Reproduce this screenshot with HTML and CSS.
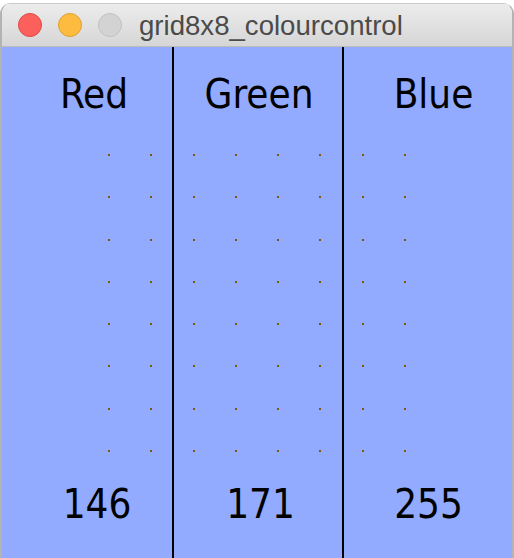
FILE: index.html
```html
<!DOCTYPE html>
<html>
<head>
<meta charset="utf-8">
<link rel="stylesheet" href="styles.css">
</head>
<body>
<div class="window">
  <div class="titlebar">
    <span class="light light-close"></span>
    <span class="light light-min"></span>
    <span class="light light-max"></span>
    <span class="title">grid8x8_colourcontrol</span>
  </div>
  <div class="content">
    <div class="col col-red">
      <div class="label">Red</div>
      <div class="value">146</div>
    </div>
    <div class="divider"></div>
    <div class="col col-green">
      <div class="label">Green</div>
      <div class="value">171</div>
    </div>
    <div class="divider"></div>
    <div class="col col-blue">
      <div class="label">Blue</div>
      <div class="value">255</div>
    </div>
    <div class="dots">
      <i></i><i></i><i></i><i></i><i></i><i></i><i></i><i></i>
      <i></i><i></i><i></i><i></i><i></i><i></i><i></i><i></i>
      <i></i><i></i><i></i><i></i><i></i><i></i><i></i><i></i>
      <i></i><i></i><i></i><i></i><i></i><i></i><i></i><i></i>
      <i></i><i></i><i></i><i></i><i></i><i></i><i></i><i></i>
      <i></i><i></i><i></i><i></i><i></i><i></i><i></i><i></i>
      <i></i><i></i><i></i><i></i><i></i><i></i><i></i><i></i>
      <i></i><i></i><i></i><i></i><i></i><i></i><i></i><i></i>
    </div>
  </div>
</div>
</body>
</html>
```
FILE: styles.css
```css
html, body {
  margin: 0;
  padding: 0;
  background: #ffffff;
  overflow: hidden;
}

.window {
  margin-top: 3px;
  width: 514px;
  box-sizing: border-box;
  border-left: 2px solid #b3b3b3;
  border-right: 2px solid #b3b3b3;
  border-top-left-radius: 11px;
  border-top-right-radius: 11px;
  overflow: hidden;
}

.titlebar {
  height: 44px;
  box-sizing: border-box;
  border-top: 1px solid #c9c9c9;
  border-bottom: 1px solid #bcbcbc;
  background: linear-gradient(#ececec, #d6d6d6);
  display: flex;
  align-items: center;
  padding-left: 16px;
  gap: 16px;
}

.light {
  width: 24px;
  height: 24px;
  box-sizing: border-box;
  border-radius: 50%;
  flex: none;
}

.light-close {
  background: #fc605c;
  border: 1px solid #df4744;
}

.light-min {
  background: #fdbc40;
  border: 1px solid #dea034;
}

.light-max {
  background: #d3d3d3;
  border: 1px solid #c0c0c0;
}

.title {
  margin-left: 1px;
  font-family: "Liberation Sans", Arial, sans-serif;
  font-size: 27.6px;
  color: #4b4b4b;
  line-height: 1;
  margin-top: 1px;
}

.content {
  position: relative;
  display: flex;
  height: 511px;
  background: #92abff;
}

.col {
  display: flex;
  flex-direction: column;
  font-family: "DejaVu Sans Condensed", "DejaVu Sans", sans-serif;
  font-size: 40px;
  color: #000;
  text-align: center;
  padding-top: 27px;
}

.col-red { width: 170px; }
.col-green { width: 168px; }
.col-blue { width: 168px; }

.label, .value {
  line-height: 40px;
  white-space: nowrap;
}

.value {
  margin-top: 370px;
}

.col-red .label { padding-left: 14px; }
.col-red .value { padding-left: 20px; }
.col-green .label { padding-left: 2px; }
.col-green .value { padding-left: 5px; }
.col-blue .label { padding-left: 11px; }
.col-blue .value { padding-left: 1px; }

.divider {
  width: 2px;
  background: #000;
  flex: none;
}

.dots {
  position: absolute;
  left: 106px;
  top: 107px;
  display: grid;
  grid-template-columns: repeat(8, 2px);
  grid-auto-rows: 2px;
  column-gap: 40.3px;
  row-gap: 40.3px;
}

.dots i {
  display: block;
  width: 2px;
  height: 2px;
  background: #7a5812;
}
```
